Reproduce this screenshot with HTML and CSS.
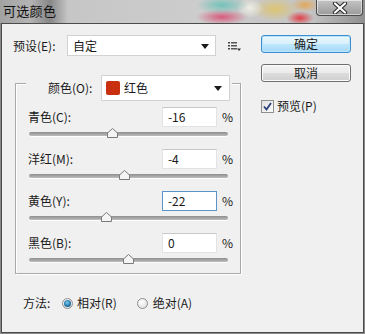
FILE: index.html
```html
<!DOCTYPE html>
<html lang="zh">
<head>
<meta charset="utf-8">
<link rel="stylesheet" href="styles.css">
</head>
<body>
<div class="window">
  <div class="titlebar">
    <span class="title">可选颜色</span>
    <span class="close">
      <svg width="18" height="12" viewBox="0 0 18 12"><path d="M4 1.5 L14 10.5 M14 1.5 L4 10.5" stroke="#2a2a2a" stroke-width="4.2" stroke-linecap="round"/><path d="M4 1.5 L14 10.5 M14 1.5 L4 10.5" stroke="#ffffff" stroke-width="2.2" stroke-linecap="round"/></svg>
    </span>
  </div>
  <div class="dialog">
    <div class="main">
      <div class="preset-row">
        <span class="lbl preset-lbl">预设(E):</span>
        <div class="select preset-select"><span class="sel-text">自定</span><span class="caret"></span></div>
        <svg class="menu-icon" width="13" height="10" viewBox="0 0 13 10">
          <rect x="0" y="0" width="2" height="1.5" fill="#444"/><rect x="3" y="0" width="6" height="1.5" fill="#555"/>
          <rect x="0" y="3" width="2" height="1.5" fill="#444"/><rect x="3" y="3" width="6" height="1.5" fill="#555"/>
          <rect x="0" y="6" width="2" height="1.5" fill="#444"/><rect x="3" y="6" width="6" height="1.5" fill="#555"/>
          <path d="M9 6.5 L13 6.5 L11 9 Z" fill="#333"/>
        </svg>
      </div>
      <div class="group">
        <div class="legend">
          <span class="lbl color-lbl">颜色(O):</span>
          <div class="select color-select"><span class="swatch"></span><span class="sel-text">红色</span><span class="caret"></span></div>
        </div>
        <div class="rows">
          <div class="slider-row">
            <div class="head"><span class="lbl row-lbl">青色(C):</span><span class="num">-16</span><span class="pct">%</span></div>
            <div class="slider"><span class="track"></span><span class="thumb" style="left: 42%"><svg width="11" height="10" viewBox="0 0 11 10"><path d="M5.5 0.5 L10.5 5 L10.5 9.5 L0.5 9.5 L0.5 5 Z" fill="#f4f4f4" stroke="#7a7a7a"/></svg></span></div>
          </div>
          <div class="slider-row">
            <div class="head"><span class="lbl row-lbl">洋红(M):</span><span class="num">-4</span><span class="pct">%</span></div>
            <div class="slider"><span class="track"></span><span class="thumb" style="left: 48%"><svg width="11" height="10" viewBox="0 0 11 10"><path d="M5.5 0.5 L10.5 5 L10.5 9.5 L0.5 9.5 L0.5 5 Z" fill="#f4f4f4" stroke="#7a7a7a"/></svg></span></div>
          </div>
          <div class="slider-row">
            <div class="head"><span class="lbl row-lbl">黄色(Y):</span><span class="num focused">-22</span><span class="pct">%</span></div>
            <div class="slider"><span class="track"></span><span class="thumb" style="left: 39%"><svg width="11" height="10" viewBox="0 0 11 10"><path d="M5.5 0.5 L10.5 5 L10.5 9.5 L0.5 9.5 L0.5 5 Z" fill="#f4f4f4" stroke="#7a7a7a"/></svg></span></div>
          </div>
          <div class="slider-row">
            <div class="head"><span class="lbl row-lbl">黑色(B):</span><span class="num">0</span><span class="pct">%</span></div>
            <div class="slider"><span class="track"></span><span class="thumb" style="left: 50%"><svg width="11" height="10" viewBox="0 0 11 10"><path d="M5.5 0.5 L10.5 5 L10.5 9.5 L0.5 9.5 L0.5 5 Z" fill="#f4f4f4" stroke="#7a7a7a"/></svg></span></div>
          </div>
        </div>
      </div>
      <div class="method-row">
        <span class="lbl method-lbl">方法:</span>
        <span class="radio checked"><span class="dot"></span></span>
        <span class="lbl radio-lbl">相对(R)</span>
        <span class="radio second"></span>
        <span class="lbl radio-lbl">绝对(A)</span>
      </div>
    </div>
    <div class="side">
      <div class="btn btn-default">确定</div>
      <div class="btn btn-cancel">取消</div>
      <div class="check">
        <span class="box"><svg width="11" height="11" viewBox="0 0 11 11"><path d="M2 5.5 L4.5 8.5 L9 2" fill="none" stroke="#2b3f7a" stroke-width="1.8"/></svg></span>
        <span class="lbl">预览(P)</span>
      </div>
    </div>
  </div>
</div>
</body>
</html>
```

FILE: styles.css
```css
* { box-sizing: border-box; }
html, body { margin: 0; padding: 0; }
body {
  width: 365px;
  height: 334px;
  overflow: hidden;
  background: #f0f0f0;
  font-family: "Noto Sans CJK SC", "Noto Sans", sans-serif;
  font-size: 12px;
  color: #1a1a1a;
}
.window {
  width: 365px;
  height: 334px;
  display: flex;
  flex-direction: column;
  background: #8a8a8a;
}
.titlebar {
  height: 23px;
  display: flex;
  justify-content: space-between;
  align-items: flex-start;
  background:
    radial-gradient(ellipse 26px 9px at 222px 5px, rgba(110,195,185,0.95), rgba(110,195,185,0) 100%),
    radial-gradient(ellipse 26px 8px at 222px 17px, rgba(215,85,120,0.95), rgba(215,85,120,0) 100%),
    radial-gradient(ellipse 14px 10px at 250px 8px, rgba(240,240,230,0.95), rgba(240,240,230,0) 100%),
    radial-gradient(ellipse 24px 12px at 275px 9px, rgba(222,196,110,0.95), rgba(222,196,110,0) 100%),
    radial-gradient(ellipse 14px 7px at 300px 18px, rgba(225,55,65,0.95), rgba(225,55,65,0) 100%),
    radial-gradient(ellipse 14px 7px at 305px 5px, rgba(230,165,80,0.9), rgba(230,165,80,0) 100%),
    linear-gradient(90deg, #a2a2a2 0px, #b4b4b4 30px, #878787 50px, #c6c6c6 68px, #cdcdcd 200px, #c4c4c4 310px, #8f8f8f 365px);
}
.title {
  font-size: 13px;
  line-height: 17px;
  margin: 2px 0 0 3px;
  color: #111;
  letter-spacing: 0.3px;
}
.close {
  width: 47px;
  height: 16px;
  margin-right: 2px;
  border: 1px solid #4a4a4a;
  border-top: none;
  border-radius: 0 0 4px 4px;
  background: linear-gradient(#c4c4c4, #9a9a9a);
  box-shadow: inset 0 0 0 1px rgba(255,255,255,0.55);
  display: flex;
  align-items: center;
  justify-content: center;
}
.dialog {
  flex: 1;
  margin: 0 1px 1px 1px;
  border: 1px solid #4b4b4b;
  background: #f0f0f0;
  display: flex;
  padding: 11px 0 0 11px;
}
.lbl { line-height: 16px; white-space: nowrap; }
.main { width: 247px; display: flex; flex-direction: column; }
.preset-row { display: flex; align-items: center; height: 21px; }
.preset-lbl { width: 54px; }
.select {
  background: #fff;
  border: 1px solid #d2d2d2;
  display: flex;
  align-items: center;
  position: relative;
}
.preset-select { width: 149px; height: 21px; padding-left: 5px; }
.sel-text { line-height: 16px; }
.caret {
  position: absolute;
  right: 6px;
  top: 50%;
  margin-top: -2px;
  width: 0;
  height: 0;
  border-left: 4px solid transparent;
  border-right: 4px solid transparent;
  border-top: 5px solid #1a1a1a;
}
.color-select .caret { right: 7px; }
.menu-icon { margin-left: 12px; margin-top: 2px; }
.group {
  margin: 27px 0 0 2px;
  width: 226px;
  border: 1px solid #a9a9a9;
  box-shadow: 1px 1px 0 #fff, inset 1px 1px 0 #fff;
  padding-bottom: 1px;
}
.legend {
  margin: -9px 0 0 10px;
  width: 206px;
  height: 26px;
  background: #f0f0f0;
  display: flex;
  align-items: center;
  padding-left: 22px;
}
.color-lbl { width: 53px; }
.color-select { width: 129px; height: 26px; padding-left: 4px; }
.swatch {
  width: 14px;
  height: 14px;
  background: #c9300f;
  border-radius: 2px;
  margin-right: 4px;
}
.rows {
  margin-top: 6px;
  padding-left: 12px;
  display: flex;
  flex-direction: column;
  gap: 3px;
}
.head { display: flex; align-items: center; height: 20px; width: 205px; }
.row-lbl { flex: 1; }
.num {
  width: 55px;
  height: 20px;
  background: #fff;
  border: 1px solid #e3e3e3;
  border-top-color: #c8c8c8;
  padding-left: 5px;
  line-height: 18px;
}
.num.focused { border-color: #5c93c8; }
.pct { margin-left: 5px; line-height: 16px; }
.slider { position: relative; height: 19px; width: 200px; }
.track {
  position: absolute;
  left: 1px;
  right: 0;
  top: 5px;
  height: 4px;
  border-radius: 2px;
  background: linear-gradient(#8e8e8e, #bdbdbd);
  box-shadow: 0 1px 0 #fdfdfd;
}
.thumb {
  position: absolute;
  top: 1px;
  width: 11px;
  height: 10px;
  margin-left: -5px;
  display: block;
}
.thumb svg { display: block; }
.method-row {
  display: flex;
  align-items: center;
  margin: 21px 0 0 10px;
  height: 16px;
}
.method-lbl { width: 39px; }
.radio {
  width: 11px;
  height: 11px;
  border-radius: 50%;
  border: 1px solid #8f8f8f;
  background: radial-gradient(circle at 40% 35%, #ffffff, #d8d8d8);
  display: flex;
  align-items: center;
  justify-content: center;
  margin-right: 4px;
}
.radio.second { margin-left: 20px; margin-right: 5px; }
.dot {
  width: 7px;
  height: 7px;
  border-radius: 50%;
  background: radial-gradient(circle at 45% 40%, #7fd0f5, #1d6e9e 60%, #134a6d);
}
.side {
  width: 90px;
  display: flex;
  flex-direction: column;
  margin-left: 1px;
}
.btn {
  height: 18px;
  border-radius: 3px;
  display: flex;
  align-items: center;
  justify-content: center;
  line-height: 16px;
}
.btn-default {
  border: 1px solid #3c8fd0;
  background: linear-gradient(#eaf6fd 0%, #d9f0fc 50%, #bee6fd 51%, #a7d9f5 100%);
  box-shadow: inset 0 0 0 1px #b9e3fa;
}
.btn-cancel {
  margin-top: 11px;
  border: 1px solid #707070;
  background: linear-gradient(#f2f2f2 0%, #ebebeb 50%, #dddddd 51%, #cfcfcf 100%);
  box-shadow: inset 0 0 0 1px #fbfbfb;
}
.check {
  margin-top: 16px;
  display: flex;
  align-items: center;
}
.box {
  width: 13px;
  height: 13px;
  border: 1px solid #8e8f8f;
  background: linear-gradient(135deg, #e0e0e0, #fbfbfb);
  display: flex;
  align-items: center;
  justify-content: center;
  margin-right: 3px;
}
.box svg { display: block; }
```
